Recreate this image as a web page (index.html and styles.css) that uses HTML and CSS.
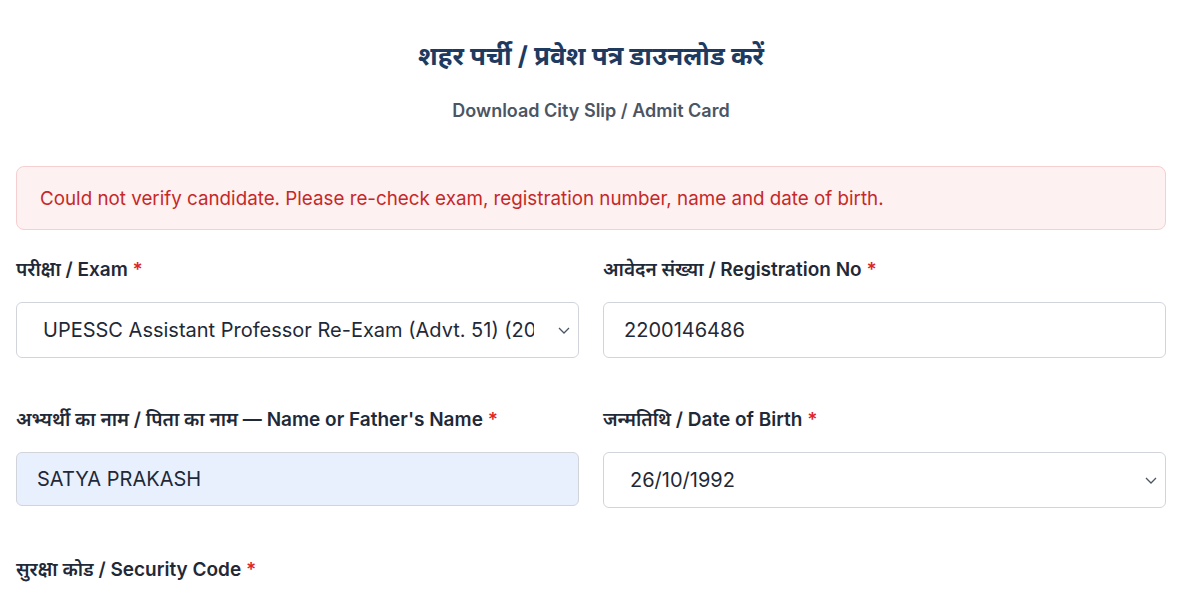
FILE: index.html
```html
<!DOCTYPE html>
<html lang="hi">
  <head>
    <meta charset="UTF-8" />
    <meta name="viewport" content="width=device-width, initial-scale=1.0" />
    <title>शहर पर्ची / प्रवेश पत्र डाउनलोड करें</title>
    <link rel="stylesheet" href="styles.css">
  </head>
  <body>
    <div class="page">
      <h1 class="title">शहर पर्ची / प्रवेश पत्र डाउनलोड करें</h1>
      <p class="subtitle">Download City Slip / Admit Card</p>

      <div class="alert">
        Could not verify candidate. Please re-check exam, registration number, name and date of birth.
      </div>

      <form class="grid">
        <div class="field">
          <label for="exam">परीक्षा / Exam <span class="req">*</span></label>
          <div class="select-wrap">
            <select id="exam" class="control select">
              <option>UPESSC Assistant Professor Re-Exam (Advt. 51) (2025)</option>
            </select>
            <svg class="chevron" width="14" height="14" viewBox="0 0 14 14"><path d="M2 5l5 5 5-5" fill="none" stroke="#4b5563" stroke-width="1.3"/></svg>
          </div>
        </div>

        <div class="field">
          <label for="regno">आवेदन संख्या / Registration No <span class="req">*</span></label>
          <input id="regno" class="control" type="text" value="2200146486" />
        </div>

        <div class="field">
          <label for="name">अभ्यर्थी का नाम / पिता का नाम — Name or Father's Name <span class="req">*</span></label>
          <input id="name" class="control filled" type="text" value="SATYA PRAKASH" />
        </div>

        <div class="field">
          <label for="dob">जन्मतिथि / Date of Birth <span class="req">*</span></label>
          <div class="select-wrap">
            <div id="dob" class="control date">26/10/1992</div>
            <svg class="chevron" width="14" height="14" viewBox="0 0 14 14"><path d="M2 5l5 5 5-5" fill="none" stroke="#4b5563" stroke-width="1.3"/></svg>
          </div>
        </div>

        <div class="field">
          <label for="captcha">सुरक्षा कोड / Security Code <span class="req">*</span></label>
        </div>
      </form>
    </div>
  </body>
</html>
```

FILE: styles.css
```css
body {
  margin: 0;
  background-color: #ffffff;
  color: #1f2937;
  font-family: Inter, "Noto Sans", sans-serif;
}

.page {
  width: 1150px;
  padding: 0 0 0 16px;
}

.title {
  margin: 0;
  padding-top: 38px;
  text-align: center;
  font-size: 26px;
  font-weight: 700;
  color: #1e3a5f;
  line-height: 36px;
}

.subtitle {
  margin: 0;
  padding-top: 23px;
  text-align: center;
  font-size: 18px;
  font-weight: 600;
  color: #4b5563;
  line-height: 28px;
}

.alert {
  margin-top: 41px;
  height: 64px;
  box-sizing: border-box;
  padding: 0 23px;
  display: flex;
  align-items: center;
  background-color: #fef1f1;
  border: 1px solid #f6cfd0;
  border-radius: 8px;
  color: #c62828;
  font-size: 18.8px;
}

.grid {
  display: grid;
  grid-template-columns: 1fr 1fr;
  column-gap: 24px;
  row-gap: 0;
  margin-top: 26px;
}

.field {
  height: 150px;
}

label {
  display: block;
  font-size: 19px;
  font-weight: 600;
  color: #1f2937;
  line-height: 28px;
  margin-bottom: 18px;
}

.req {
  color: #dc2626;
}

.control {
  display: block;
  width: 100%;
  height: 56px;
  box-sizing: border-box;
  border: 1px solid #d1d5db;
  border-radius: 6px;
  background-color: #ffffff;
  color: #1f2937;
  font-family: Inter, "Noto Sans", sans-serif;
  font-size: 20px;
  padding: 0 20px;
  outline: none;
}

.filled {
  background-color: #e8f0fe;
  height: 54px;
}

.select-wrap {
  position: relative;
}

.select {
  appearance: none;
  -webkit-appearance: none;
  padding: 0 44px 0 26px;
  text-overflow: clip;
}

.date {
  display: flex;
  align-items: center;
  padding-left: 26px;
}

.chevron {
  position: absolute;
  right: 8px;
  top: 21px;
}
```
